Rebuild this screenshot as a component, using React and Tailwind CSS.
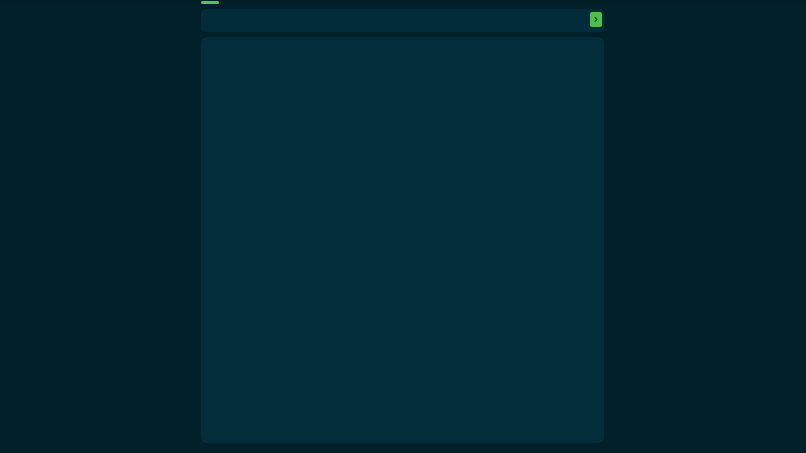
export default function App() {
  return (
    <div className="min-h-[453px] w-full bg-[#01212a] font-['Liberation_Sans',sans-serif]">
      <div className="h-[5px] w-full bg-[#011d25]">
        <div className="mx-auto w-[404px] pt-[1px]">
          <div className="h-[3px] w-[18px] rounded-full bg-[#5cc05c]" />
        </div>
      </div>
      <div className="mx-auto w-[404px] pr-[1px]">
        <div className="mt-[4px] flex h-[23px] items-start justify-end rounded-[4px] bg-[#022c39] pr-[2px] pt-[3px]">
          <button className="flex h-[15px] w-[12px] items-center justify-center rounded-[2px] bg-[#4fbd4f] text-[#1d4a25]">
            <svg width="6" height="7" viewBox="0 0 6 7" fill="none">
              <path d="M2 1.5 L4 3.5 L2 5.5" stroke="currentColor" strokeWidth="1.1" strokeLinecap="round" strokeLinejoin="round" />
            </svg>
          </button>
        </div>
        <div className="mt-[5px] h-[406px] rounded-[6px] bg-[#022d3b]" />
      </div>
    </div>
  );
}
